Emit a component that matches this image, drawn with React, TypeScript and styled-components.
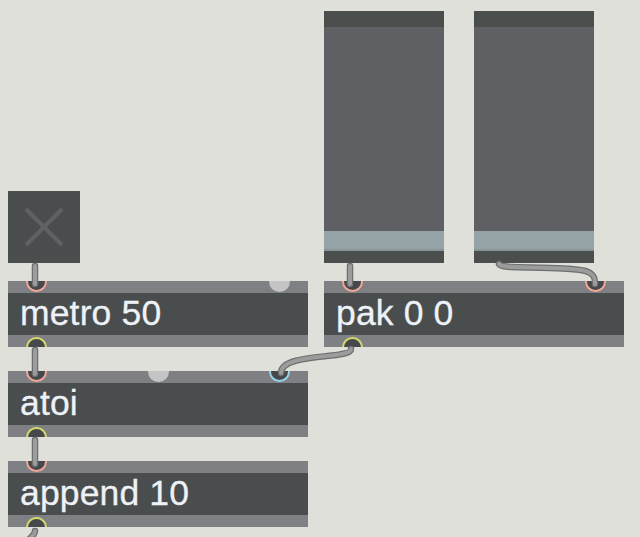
import React from "react";
import styled, { createGlobalStyle } from "styled-components";

const Global = createGlobalStyle`
  html, body { margin: 0; padding: 0; background: #dfe0da; }
  body { width: 640px; height: 537px; overflow: hidden; }
`;

const Patcher = styled.div`
  position: relative;
  width: 640px;
  height: 537px;
  background: #dfe0da;
  overflow: hidden;
`;

const ObjectBox = styled.div<{ $x: number; $y: number; $w: number }>`
  position: absolute;
  left: ${(p) => p.$x}px;
  top: ${(p) => p.$y}px;
  width: ${(p) => p.$w}px;
  height: 66px;
  display: flex;
  flex-direction: column;
  overflow: hidden;
`;

const Bar = styled.div`
  height: 12px;
  background: #7f8084;
  flex: none;
`;

const Body = styled.div`
  height: 42px;
  flex: none;
  background: #4a4d4e;
  color: #eef2f7;
  font-family: "Liberation Sans", Arial, sans-serif;
  font-size: 35.5px;
  letter-spacing: 0.15px;
  line-height: 40px;
  padding-left: 12px;
  white-space: nowrap;
  -webkit-text-stroke: 0.3px #eef2f7;
`;

type PortKind = "pink" | "yellow" | "blue" | "idle";
const ringColor: Record<PortKind, string> = {
  pink: "#f2a796",
  yellow: "#d6d96a",
  blue: "#94d3ea",
  idle: "#c3c4c3",
};

const Port = styled.span<{ $x: number; $edge: "top" | "bottom"; $kind: PortKind }>`
  position: absolute;
  left: ${(p) => p.$x - 10.5}px;
  ${(p) => (p.$edge === "top" ? "top: -10.5px;" : "bottom: -10.5px;")}
  width: 21px;
  height: 21px;
  box-sizing: border-box;
  border-radius: 50%;
  background: ${(p) => (p.$kind === "idle" ? ringColor.idle : "#45484c")};
  border: ${(p) => (p.$kind === "idle" ? "none" : `2px solid ${ringColor[p.$kind]}`)};
`;

const Slider = styled.div<{ $x: number; $y: number }>`
  position: absolute;
  left: ${(p) => p.$x}px;
  top: ${(p) => p.$y}px;
  width: 120px;
  height: 252px;
  display: flex;
  flex-direction: column;
`;

const SliderCap = styled.div<{ $h: number }>`
  height: ${(p) => p.$h}px;
  background: #4a4e4d;
  flex: none;
`;

const SliderTrack = styled.div`
  flex: 1;
  background: #5f6064;
`;

const SliderKnob = styled.div`
  height: 18px;
  background: #96a3a6;
  border-bottom: 2px solid #87959a;
  flex: none;
`;

const Toggle = styled.div<{ $x: number; $y: number }>`
  position: absolute;
  left: ${(p) => p.$x}px;
  top: ${(p) => p.$y}px;
  width: 72px;
  height: 72px;
  background: #4a4d4e;
  display: flex;
  align-items: center;
  justify-content: center;
`;

const Cables = styled.svg`
  position: absolute;
  left: 0;
  top: 0;
  width: 640px;
  height: 537px;
  pointer-events: none;
`;

const Cable = ({ d }: { d: string }) => (
  <g fill="none" strokeLinecap="round" strokeLinejoin="round">
    <path d={d} stroke="#6d6e6e" strokeWidth={6.5} />
    <path d={d} stroke="#9b9c9c" strokeWidth={4} />
  </g>
);

export default function App() {
  return (
    <>
      <Global />
      <Patcher>
        <Toggle $x={8} $y={191}>
          <svg width="40" height="40" viewBox="0 0 40 40">
            <path d="M2 2 L38 38 M38 2 L2 38" stroke="#5f6264" strokeWidth={4} />
          </svg>
        </Toggle>

        <Slider $x={324} $y={11}>
          <SliderCap $h={16} />
          <SliderTrack />
          <SliderKnob />
          <SliderCap $h={12} />
        </Slider>
        <Slider $x={474} $y={11}>
          <SliderCap $h={16} />
          <SliderTrack />
          <SliderKnob />
          <SliderCap $h={12} />
        </Slider>

        <ObjectBox $x={8} $y={281} $w={300}>
          <Bar />
          <Body>metro 50</Body>
          <Bar />
          <Port $x={28} $edge="top" $kind="pink" />
          <Port $x={271.5} $edge="top" $kind="idle" />
          <Port $x={28} $edge="bottom" $kind="yellow" />
        </ObjectBox>

        <ObjectBox $x={324} $y={281} $w={300}>
          <Bar />
          <Body>pak 0 0</Body>
          <Bar />
          <Port $x={28.5} $edge="top" $kind="pink" />
          <Port $x={271} $edge="top" $kind="pink" />
          <Port $x={28.5} $edge="bottom" $kind="yellow" />
        </ObjectBox>

        <ObjectBox $x={8} $y={371} $w={300}>
          <Bar />
          <Body>atoi</Body>
          <Bar />
          <Port $x={28} $edge="top" $kind="pink" />
          <Port $x={150} $edge="top" $kind="idle" />
          <Port $x={271.5} $edge="top" $kind="blue" />
          <Port $x={28} $edge="bottom" $kind="yellow" />
        </ObjectBox>

        <ObjectBox $x={8} $y={461} $w={300}>
          <Bar />
          <Body>append 10</Body>
          <Bar />
          <Port $x={28} $edge="top" $kind="pink" />
          <Port $x={28} $edge="bottom" $kind="yellow" />
        </ObjectBox>

        <Cables viewBox="0 0 640 537">
          <Cable d="M35 266 L35 284" />
          <Cable d="M35 350 L35 374" />
          <Cable d="M35 440 L35 464" />
          <Cable d="M35 531 C35 536 29 537 25 545" />
          <Cable d="M350 266 L350 284" />
          <Cable d="M351 349 C351 360 281 352 281 373" />
          <Cable d="M499 264 C501 268 520 267 550 268 C585 269 596 270 595 284" />
        </Cables>
      </Patcher>
    </>
  );
}
